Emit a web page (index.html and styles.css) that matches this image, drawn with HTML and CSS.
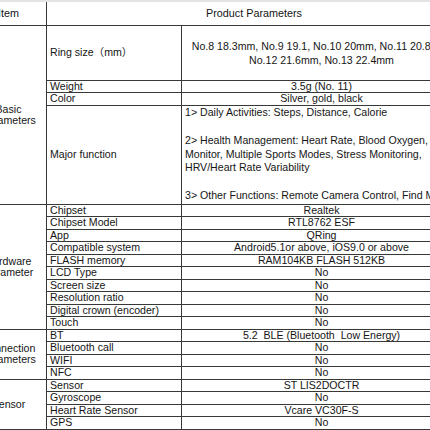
FILE: index.html
```html
<!DOCTYPE html>
<html lang="en">

<head>
  <meta charset="UTF-8">
  <meta name="viewport" content="width=device-width, initial-scale=1.0">
  <title>Smart Ring Specification</title>
  <link rel="stylesheet" href="styles.css">
</head>

<body>
  <div class="sheet">
    <table class="spec">
      <colgroup>
        <col class="col-item">
        <col class="col-name">
        <col class="col-value">
      </colgroup>
      <tr class="row-head">
        <th>Item</th>
        <th colspan="2">Product Parameters</th>
      </tr>

      <!-- Basic -->
      <tr class="row-ring">
        <td class="group" rowspan="4">Basic<br>Parameters</td>
        <td class="name">Ring size（mm）</td>
        <td class="value">No.8 18.3mm, No.9 19.1, No.10 20mm, No.11 20.8mm,<br>No.12 21.6mm, No.13 22.4mm</td>
      </tr>
      <tr class="row">
        <td class="name">Weight</td>
        <td class="value">3.5g (No. 11)</td>
      </tr>
      <tr class="row">
        <td class="name">Color</td>
        <td class="value">Silver, gold, black</td>
      </tr>
      <tr class="row-major">
        <td class="name">Major function</td>
        <td class="value text">1&gt; Daily Activities: Steps, Distance, Calorie<br><br>2&gt; Health Management: Heart Rate, Blood Oxygen, Sleep<br>Monitor, Multiple Sports Modes, Stress Monitoring,<br>HRV/Heart Rate Variability<br><br>3&gt; Other Functions: Remote Camera Control, Find My Phone</td>
      </tr>

      <!-- Hardware -->
      <tr class="row">
        <td class="group" rowspan="10">Hardware<br>Parameter</td>
        <td class="name">Chipset</td>
        <td class="value">Realtek</td>
      </tr>
      <tr class="row">
        <td class="name">Chipset Model</td>
        <td class="value">RTL8762 ESF</td>
      </tr>
      <tr class="row">
        <td class="name">App</td>
        <td class="value">QRing</td>
      </tr>
      <tr class="row">
        <td class="name">Compatible system</td>
        <td class="value">Android5.1or above, iOS9.0 or above</td>
      </tr>
      <tr class="row">
        <td class="name">FLASH memory</td>
        <td class="value">RAM104KB FLASH 512KB</td>
      </tr>
      <tr class="row">
        <td class="name">LCD Type</td>
        <td class="value">No</td>
      </tr>
      <tr class="row">
        <td class="name">Screen size</td>
        <td class="value">No</td>
      </tr>
      <tr class="row">
        <td class="name">Resolution ratio</td>
        <td class="value">No</td>
      </tr>
      <tr class="row">
        <td class="name">Digital crown (encoder)</td>
        <td class="value">No</td>
      </tr>
      <tr class="row">
        <td class="name">Touch</td>
        <td class="value">No</td>
      </tr>

      <!-- Connection -->
      <tr class="row">
        <td class="group" rowspan="4">Connection<br>Parameters</td>
        <td class="name">BT</td>
        <td class="value">5.2&nbsp; BLE (Bluetooth&nbsp; Low Energy)</td>
      </tr>
      <tr class="row">
        <td class="name">Bluetooth call</td>
        <td class="value">No</td>
      </tr>
      <tr class="row">
        <td class="name">WIFI</td>
        <td class="value">No</td>
      </tr>
      <tr class="row">
        <td class="name">NFC</td>
        <td class="value">No</td>
      </tr>

      <!-- Sensor -->
      <tr class="row">
        <td class="group" rowspan="4">Sensor</td>
        <td class="name">Sensor</td>
        <td class="value">ST LIS2DOCTR</td>
      </tr>
      <tr class="row">
        <td class="name">Gyroscope</td>
        <td class="value">No</td>
      </tr>
      <tr class="row">
        <td class="name">Heart Rate Sensor</td>
        <td class="value">Vcare VC30F-S</td>
      </tr>
      <tr class="row">
        <td class="name">GPS</td>
        <td class="value">No</td>
      </tr>
    </table>
  </div>
</body>

</html>
```

FILE: styles.css
```css
html,
body {
  margin: 0;
  padding: 0;
  background: #fff;
  overflow: hidden;
}

.sheet {
  border-top: 2px solid #e4e4e4;
  width: 430px;
  height: 428px;
  overflow: hidden;
}

.spec {
  margin-left: -30px;
  width: 491px;
  table-layout: fixed;
  border-collapse: collapse;
  font-family: "Liberation Sans", Arial, "Noto Sans CJK SC", sans-serif;
  font-size: 10.6px;
  color: #151515;
}

.col-item {
  width: 76px;
}

.col-name {
  width: 135px;
}

.col-value {
  width: 280px;
}

.spec th,
.spec td {
  border: 1px solid #383838;
  padding: 0 3px;
  line-height: 11px;
  white-space: nowrap;
  overflow: hidden;
  font-weight: normal;
}

.spec th {
  border-top: 0;
  text-align: center;
  font-size: 10.8px;
}

.row-head {
  height: 23.5px;
}

.row-ring {
  height: 54.5px;
}

.row-major {
  height: 99px;
}

.row {
  height: 12.5px;
}

.group {
  text-align: center;
  line-height: 14px;
}

.name {
  text-align: left;
}

.value {
  text-align: center;
}

.row-ring .value {
  line-height: 14px;
  overflow: visible;
}

.value.text {
  text-align: left;
  line-height: 13.8px;
  overflow: visible;
}
```
